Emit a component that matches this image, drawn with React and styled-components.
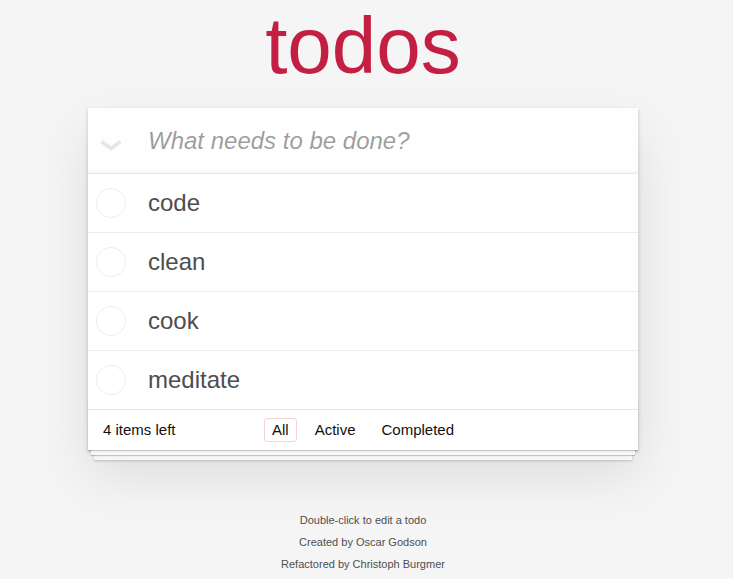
import React from "react";
import styled, { createGlobalStyle } from "styled-components";

const GlobalStyle = createGlobalStyle`
  html, body {
    margin: 0;
    padding: 0;
  }
  body {
    background: #f5f5f5;
    color: #111111;
    font: 14px "Liberation Sans", Arial, Helvetica, sans-serif;
    line-height: 1.4em;
    -webkit-font-smoothing: antialiased;
  }
  * { box-sizing: border-box; }
`;

const Viewport = styled.div`
  padding-right: 7px;
`;

const Page = styled.div`
  max-width: 550px;
  min-width: 230px;
  margin: 0 auto;
`;

const Title = styled.h1`
  margin: 0 0 16px;
  font-size: 80px;
  line-height: 92px;
  font-weight: 400;
  text-align: center;
  color: #c21f43;
  text-rendering: optimizeLegibility;
`;

const TodoApp = styled.section`
  background: #fff;
  position: relative;
  box-shadow: 0 2px 4px 0 rgba(0, 0, 0, 0.2), 0 25px 50px 0 rgba(0, 0, 0, 0.1);
`;

const Header = styled.header`
  display: flex;
  height: 65px;
  background: rgba(0, 0, 0, 0.003);
  box-shadow: inset 0 -2px 1px rgba(0, 0, 0, 0.03);
`;

const ToggleAll = styled.label`
  width: 46px;
  flex: none;
  display: flex;
  align-items: center;
  justify-content: center;
  padding-top: 10px;
`;

const NewTodo = styled.input`
  flex: 1;
  min-width: 0;
  border: none;
  outline: none;
  background: transparent;
  margin: 0;
  padding: 0 16px 0 14px;
  font-family: inherit;
  font-size: 24px;
  line-height: 1.4em;
  color: #4d4d4d;
  &::placeholder {
    font-style: italic;
    color: rgba(0, 0, 0, 0.4);
  }
`;

const Main = styled.section`
  border-top: 1px solid #e6e6e6;
`;

const List = styled.ul`
  margin: 0;
  padding: 0;
  list-style: none;
`;

const Item = styled.li`
  display: flex;
  align-items: center;
  font-size: 24px;
  border-bottom: 1px solid #ededed;
  &:last-child {
    border-bottom: none;
  }
`;

const CheckCell = styled.span`
  width: 46px;
  flex: none;
  display: flex;
  align-items: center;
  justify-content: center;
`;

const ItemLabel = styled.label`
  flex: 1;
  padding: 15px 15px 15px 14px;
  line-height: 28px;
  color: #4d4d4d;
  word-break: break-all;
`;

const Footer = styled.footer`
  position: relative;
  display: grid;
  grid-template-columns: 1fr auto 1fr;
  align-items: center;
  height: 41px;
  padding: 0 15px;
  font-size: 15px;
  color: #111;
  border-top: 1px solid #e6e6e6;

  &::before {
    content: "";
    position: absolute;
    right: 0;
    bottom: 0;
    left: 0;
    height: 50px;
    overflow: hidden;
    pointer-events: none;
    box-shadow: 0 1px 1px rgba(0, 0, 0, 0.2), 0 8px 0 -3px #f6f6f6,
      0 9px 1px -3px rgba(0, 0, 0, 0.2), 0 16px 0 -6px #f6f6f6,
      0 17px 2px -6px rgba(0, 0, 0, 0.2);
  }
`;

const Count = styled.span`
  text-align: left;
  position: relative;
`;

const Filters = styled.ul`
  display: flex;
  gap: 10px;
  margin: 0;
  padding: 0;
  list-style: none;
  position: relative;
`;

const FilterLink = styled.a`
  display: block;
  padding: 3px 7px;
  line-height: 16px;
  color: inherit;
  text-decoration: none;
  border: 1px solid ${(p) => (p.$selected ? "rgba(175, 47, 47, 0.2)" : "transparent")};
  border-radius: 3px;
  cursor: pointer;
`;

const Info = styled.footer`
  margin: 65px auto 0;
  color: #4d4d4d;
  font-size: 11px;
  text-shadow: 0 1px 0 rgba(255, 255, 255, 0.5);
  text-align: center;
`;

const InfoLine = styled.p`
  margin: 11px 0;
  line-height: 1;
`;

const Chevron = () => (
  <svg width="24" height="13" viewBox="0 0 24 13" aria-hidden="true">
    <polyline
      points="2.5,2.5 12,9.5 21.5,2.5"
      fill="none"
      stroke="#e6e6e6"
      strokeWidth="3.6"
      strokeLinecap="butt"
      strokeLinejoin="miter"
    />
  </svg>
);

const Circle = () => (
  <svg width="32" height="32" viewBox="0 0 32 32" aria-hidden="true">
    <circle cx="16" cy="16" r="14.6" fill="none" stroke="#ededed" strokeWidth="1" />
  </svg>
);

const todos = ["code", "clean", "cook", "meditate"];
const filters = ["All", "Active", "Completed"];

export default function App() {
  return (
    <>
      <GlobalStyle />
      <Viewport>
        <Page>
          <Title>todos</Title>
          <TodoApp>
            <Header>
              <ToggleAll>
                <Chevron />
              </ToggleAll>
              <NewTodo placeholder="What needs to be done?" />
            </Header>
            <Main>
              <List>
                {todos.map((t) => (
                  <Item key={t}>
                    <CheckCell>
                      <Circle />
                    </CheckCell>
                    <ItemLabel>{t}</ItemLabel>
                  </Item>
                ))}
              </List>
            </Main>
            <Footer>
              <Count>4 items left</Count>
              <Filters>
                {filters.map((f) => (
                  <li key={f}>
                    <FilterLink $selected={f === "All"}>{f}</FilterLink>
                  </li>
                ))}
              </Filters>
              <span />
            </Footer>
          </TodoApp>
          <Info>
            <InfoLine>Double-click to edit a todo</InfoLine>
            <InfoLine>Created by Oscar Godson</InfoLine>
            <InfoLine>Refactored by Christoph Burgmer</InfoLine>
          </Info>
        </Page>
      </Viewport>
    </>
  );
}
